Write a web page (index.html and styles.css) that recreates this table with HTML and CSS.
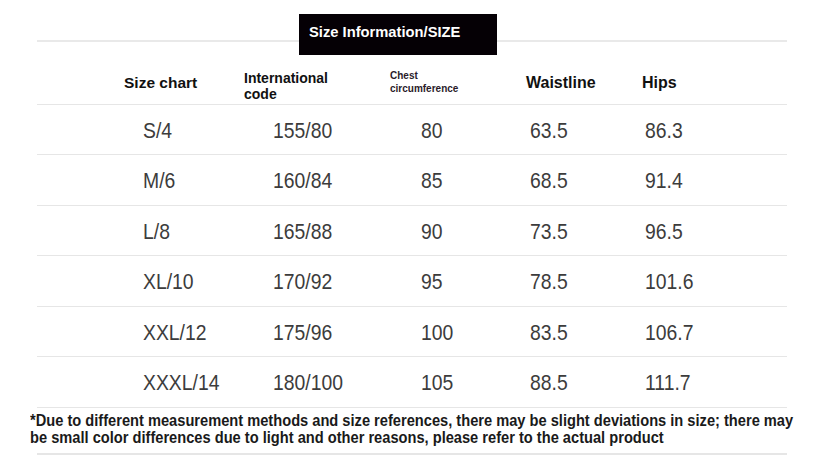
FILE: index.html
```html
<!DOCTYPE html>
<html lang="en">
<head>
<meta charset="utf-8">
<title>Size Information</title>
<link rel="stylesheet" href="styles.css">
</head>
<body>
<div class="sheet">
  <div class="title-area">
    <div class="title-box"><span class="title-text">Size Information/SIZE</span></div>
  </div>
  <div class="row head">
    <div class="cell c1"><span class="h-big">Size chart</span></div>
    <div class="cell c2"><span class="h-mid">International<br>code</span></div>
    <div class="cell c3"><span class="h-small">Chest<br>circumference</span></div>
    <div class="cell c4"><span class="h-big">Waistline</span></div>
    <div class="cell c5"><span class="h-big h-hips">Hips</span></div>
  </div>
  <div class="row data">
    <div class="cell c1"><span class="num">S/4</span></div>
    <div class="cell c2"><span class="num">155/80</span></div>
    <div class="cell c3"><span class="num">80</span></div>
    <div class="cell c4"><span class="num">63.5</span></div>
    <div class="cell c5"><span class="num">86.3</span></div>
  </div>
  <div class="row data">
    <div class="cell c1"><span class="num">M/6</span></div>
    <div class="cell c2"><span class="num">160/84</span></div>
    <div class="cell c3"><span class="num">85</span></div>
    <div class="cell c4"><span class="num">68.5</span></div>
    <div class="cell c5"><span class="num">91.4</span></div>
  </div>
  <div class="row data">
    <div class="cell c1"><span class="num">L/8</span></div>
    <div class="cell c2"><span class="num">165/88</span></div>
    <div class="cell c3"><span class="num">90</span></div>
    <div class="cell c4"><span class="num">73.5</span></div>
    <div class="cell c5"><span class="num">96.5</span></div>
  </div>
  <div class="row data">
    <div class="cell c1"><span class="num">XL/10</span></div>
    <div class="cell c2"><span class="num">170/92</span></div>
    <div class="cell c3"><span class="num">95</span></div>
    <div class="cell c4"><span class="num">78.5</span></div>
    <div class="cell c5"><span class="num">101.6</span></div>
  </div>
  <div class="row data">
    <div class="cell c1"><span class="num">XXL/12</span></div>
    <div class="cell c2"><span class="num">175/96</span></div>
    <div class="cell c3"><span class="num">100</span></div>
    <div class="cell c4"><span class="num">83.5</span></div>
    <div class="cell c5"><span class="num">106.7</span></div>
  </div>
  <div class="row data">
    <div class="cell c1"><span class="num">XXXL/14</span></div>
    <div class="cell c2"><span class="num">180/100</span></div>
    <div class="cell c3"><span class="num">105</span></div>
    <div class="cell c4"><span class="num">88.5</span></div>
    <div class="cell c5"><span class="num">111.7</span></div>
  </div>
  <div class="note">
    <p class="note-text">*Due to different measurement methods and size references, there may be slight deviations in size; there may<br>be small color differences due to light and other reasons, please refer to the actual product</p>
  </div>
</div>
</body>
</html>
```

FILE: styles.css
```css
html, body {
  margin: 0;
  padding: 0;
  background: #ffffff;
}

.sheet {
  width: 816px;
  height: 462px;
  overflow: hidden;
  font-family: "Liberation Sans", Arial, sans-serif;
  color: #111;
}

.title-area {
  position: relative;
  height: 55px;
}

.title-area::before {
  content: "";
  position: absolute;
  left: 37px;
  right: 29px;
  top: 40px;
  height: 2px;
  background: #e9e9e9;
}

.title-box {
  position: relative;
  z-index: 1;
  margin-left: 299px;
  top: 14px;
  width: 198px;
  height: 41px;
  background: #050005;
  box-sizing: border-box;
  padding: 9px 0 0 10px;
}

.title-text {
  display: inline-block;
  color: #fff;
  font-weight: 700;
  font-size: 15.5px;
  line-height: 18px;
  white-space: nowrap;
  transform: scaleX(0.95);
  transform-origin: left center;
}

.row {
  display: grid;
  grid-template-columns: 207px 146px 136px 116px 145px;
  margin: 0 29px 0 37px;
  border-bottom: 1.5px solid #e6e6e6;
  box-sizing: border-box;
  align-items: center;
}

.row.head {
  height: 49.5px;
  padding-top: 8px;
}

.row.data {
  height: 50.5px;
  padding-top: 3px;
}

.head .c1 { padding-left: 87px; }

.data .c1 { padding-left: 106px; }
.data .c2 { padding-left: 29px; }
.data .c3 { padding-left: 31px; }
.data .c4 { padding-left: 4px; }
.data .c5 { padding-left: 3px; }

.h-big {
  display: inline-block;
  font-weight: 700;
  font-size: 15.5px;
  line-height: 18px;
  color: #111;
  white-space: nowrap;
}

.c4 .h-big {
  font-size: 16px;
}

.h-hips {
  font-size: 16px;
}

.h-mid {
  display: inline-block;
  font-weight: 700;
  font-size: 14px;
  line-height: 16px;
  color: #111;
  margin-top: 6px;
}

.h-small {
  display: inline-block;
  font-weight: 700;
  font-size: 10px;
  line-height: 13px;
  color: #2a1b2a;
  margin-top: -1px;
}

.num {
  display: inline-block;
  font-size: 22px;
  line-height: 26px;
  font-weight: 400;
  color: #3c3c3c;
  white-space: nowrap;
  transform: scaleX(0.88);
  transform-origin: left center;
}

.note {
  margin: 0 29px 0 0;
  padding: 4px 0 9px 30px;
  position: relative;
}

.note::after {
  content: "";
  position: absolute;
  left: 37px;
  right: 0;
  bottom: 0;
  height: 1.5px;
  background: #e6e6e6;
}

.note-text {
  margin: 0;
  font-weight: 700;
  font-size: 16px;
  line-height: 17px;
  color: #1a1a1a;
  white-space: nowrap;
  transform: scaleX(0.915);
  transform-origin: left top;
}
```
